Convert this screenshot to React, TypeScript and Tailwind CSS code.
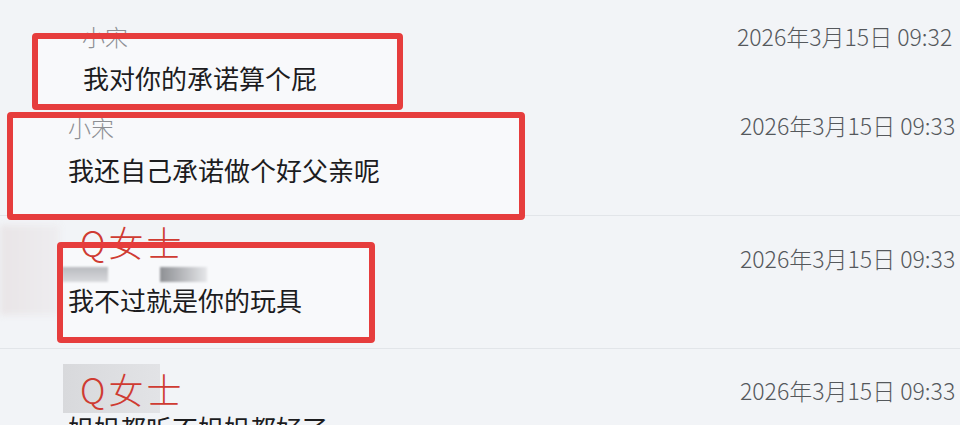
const cjk = "font-['Noto_Sans_CJK_SC',_'Noto_Sans',_sans-serif]";

function DateText({ text, top }: { text: string; top: string }) {
  return (
    <div className={`w-[223px] shrink-0 whitespace-nowrap overflow-hidden text-[23px] leading-[26px] font-light text-[#55585c] ${top}`}>
      {text}
    </div>
  );
}

export default function App() {
  return (
    <div className={`relative h-[425px] w-[960px] overflow-hidden bg-[#f2f4f7] ${cjk}`}>
      {/* lighter fill inside the marked areas */}
      <div className="absolute left-[32px] top-[33px] h-[77px] w-[371px] bg-[#f8f9fb]" />
      <div className="absolute left-[7px] top-[112px] h-[108px] w-[518px] bg-[#f8f9fb]" />
      <div className="absolute left-[57px] top-[242px] h-[101px] w-[318px] bg-[#f8f9fb]" />

      <div className="relative flex flex-col">
        {/* row 1 */}
        <div className="flex h-[100px]">
          <div className="flex-1 pl-[82px] pt-[22px]">
            <div className="text-[23px] leading-[28px] font-light text-[#8d8f93]">小宋</div>
            <div className="mt-[11px] pl-[1px] text-[26px] leading-[34px] text-[#1c1c1e]">我对你的承诺算个屁</div>
          </div>
          <DateText text="2026年3月15日 09:32" top="pt-[23px]" />
        </div>

        {/* row 2 */}
        <div className="flex h-[116px] border-b border-[#e2e5e9]">
          <div className="flex-1 pl-[68px] pt-[13px]">
            <div className="text-[23px] leading-[28px] font-light text-[#8d8f93]">小宋</div>
            <div className="mt-[12px] text-[26px] leading-[34px] text-[#1c1c1e]">我还自己承诺做个好父亲呢</div>
          </div>
          <DateText text="2026年3月15日 09:33" top="pt-[12px] pl-[3px]" />
        </div>

        {/* row 3 */}
        <div className="flex h-[133px] border-b border-[#e2e5e9]">
          <div className="mt-[9px] h-[90px] w-[60px] shrink-0 bg-gradient-to-r from-[#e9e5e7] to-[#eeedf0] blur-[3px]" />
          <div className="flex-1 pt-[7px]">
            <div className="whitespace-nowrap pl-[20px] text-[35px] leading-[38px] font-light tracking-[3px] text-[#cf3b32]">Q女士</div>
            <div className="mt-[6px] flex h-[15px] pl-[2px]">
              <div className="w-[46px] bg-gradient-to-b from-[#b9bbbf] to-[#d9dadd] blur-[1px]" />
              <div className="ml-[52px] w-[47px] bg-gradient-to-r from-[#8e9094] to-[#e6e7ea] blur-[1px]" />
            </div>
            <div className="mt-[1px] pl-[8px] text-[26px] leading-[34px] text-[#1c1c1e]">我不过就是你的玩具</div>
          </div>
          <DateText text="2026年3月15日 09:33" top="pt-[29px] pl-[3px]" />
        </div>

        {/* row 4 */}
        <div className="flex h-[120px]">
          <div className="flex-1 pl-[63px] pt-[15px]">
            <div className="flex h-[49px] w-[97px] items-center bg-gradient-to-r from-[#d8d9dc] to-[#e2e3e6] pl-[17px]">
              <span className="whitespace-nowrap text-[35px] leading-[38px] font-light tracking-[3px] text-[#cf3b32]">Q女士</span>
            </div>
            <div className="whitespace-nowrap pl-[5px] text-[26px] leading-[30px] text-[#1c1c1e]">姐姐都听不姐姐都好了</div>
          </div>
          <DateText text="2026年3月15日 09:33" top="pt-[28px] pl-[3px]" />
        </div>
      </div>

      {/* red annotation boxes */}
      <div className="absolute left-[32px] top-[33px] h-[77px] w-[371px] rounded-[4px] border-[6px] border-[#e63d3d]" />
      <div className="absolute left-[7px] top-[112px] h-[108px] w-[518px] rounded-[4px] border-[6px] border-[#e63d3d]" />
      <div className="absolute left-[57px] top-[242px] h-[101px] w-[318px] rounded-[4px] border-[6px] border-[#e63d3d]" />
    </div>
  );
}
